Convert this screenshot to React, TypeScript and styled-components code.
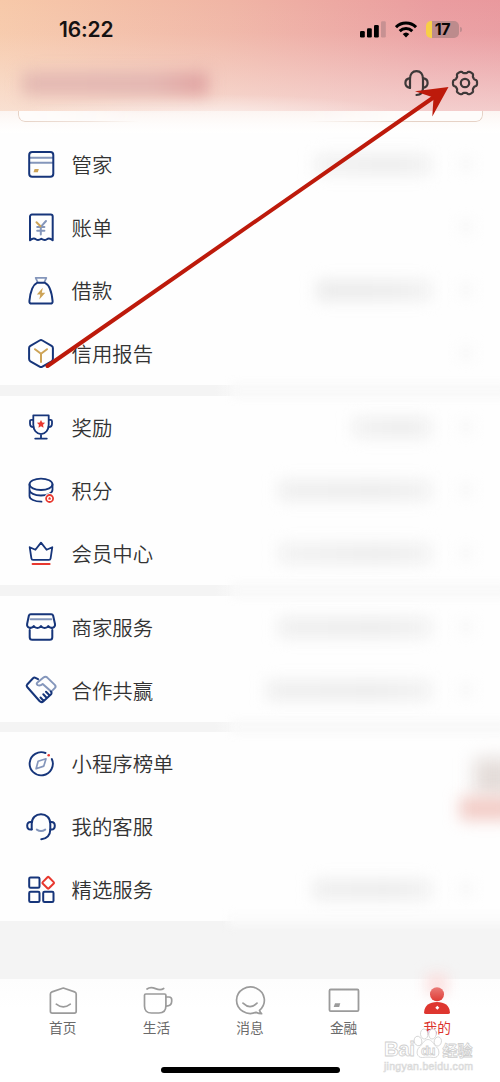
import React from "react";
import styled, { createGlobalStyle } from "styled-components";

const NAVY = "#16357a";
const SLATE = "#8496bb";
const GOLD = "#cda356";
const RED = "#e8382f";
const CJK = `"Noto Sans CJK SC", "Liberation Sans", sans-serif`;

const GlobalStyle = createGlobalStyle`
  * { box-sizing: border-box; }
  body { margin: 0; background: #fff; }
`;

const Screen = styled.div`
  position: relative;
  width: 500px;
  height: 1082px;
  overflow: hidden;
  display: flex;
  flex-direction: column;
  background: #f4f4f4;
  font-family: ${CJK};
`;

const Header = styled.header`
  position: relative;
  height: 111px;
  flex: none;
  background:
    radial-gradient(ellipse 190px 20px at 210px 114px, rgba(255, 255, 255, 0.5), rgba(255, 255, 255, 0)),
    linear-gradient(180deg, rgba(250, 240, 236, 0) 0%, rgba(250, 240, 236, 0.08) 30%, rgba(250, 240, 236, 0.6) 100%),
    linear-gradient(97deg, #f7c9a9 0%, #f0b5a5 45%, #ea9c9f 85%, #e9989d 100%);
`;

const StatusBar = styled.div`
  height: 59px;
  padding: 0 38px 0 59px;
  display: flex;
  align-items: center;
  justify-content: space-between;
`;

const Clock = styled.span`
  font: 600 21px/24px Inter, sans-serif;
  letter-spacing: -0.15px;
  color: #151212;
`;

const StatusIcons = styled.div`
  display: flex;
  align-items: center;
  gap: 9px;
`;

const BatteryWrap = styled.div`
  display: flex;
  align-items: center;
  gap: 1px;
`;

const Battery = styled.div`
  width: 33px;
  height: 17px;
  border-radius: 5px;
  background: linear-gradient(90deg, #f8cf46 5.5px, #bd8b8c 5.5px);
  color: #080606;
  font: 700 16px/17px Inter, sans-serif;
  text-align: center;
  letter-spacing: -0.3px;
`;

const BatteryTip = styled.i`
  width: 2px;
  height: 5px;
  border-radius: 0 2px 2px 0;
  background: #c08c8f;
`;

const HeaderActions = styled.div`
  height: 48px;
  padding-right: 21px;
  display: flex;
  align-items: center;
  justify-content: flex-end;
  gap: 21px;
`;

const Smudge = styled.div<{ $x: number; $y: number; $w: number; $h: number; $color: string; $blur?: number }>`
  position: absolute;
  left: ${(p) => p.$x}px;
  top: ${(p) => p.$y}px;
  width: ${(p) => p.$w}px;
  height: ${(p) => p.$h}px;
  background: ${(p) => p.$color};
  filter: blur(${(p) => p.$blur ?? 8}px);
`;

const CardZone = styled.div`
  height: 22px;
  flex: none;
  padding: 0 17.5px;
  background: linear-gradient(180deg, #fcf5f2, #fefcfb 60%, #fff);
`;

const CardEdge = styled.div`
  height: 11px;
  border: 1.5px solid #e6d2c6;
  border-top: 0;
  border-radius: 0 0 7px 7px;
  background: #fefcfb;
  mask-image: linear-gradient(90deg, #000 0, rgba(0, 0, 0, 0.6) 15%, transparent 26%, transparent 62%, #000 85%);
`;

const Section = styled.section`
  position: relative;
  flex: none;
  background: #fefefe;
`;

const Divider = styled.div<{ $h: number }>`
  position: relative;
  z-index: 1;
  flex: none;
  height: ${(p) => p.$h}px;
  background: linear-gradient(90deg, #f4f4f4 0, #f4f4f4 215px, #fafafa 240px);
  &::after {
    content: "";
    position: absolute;
    left: 232px;
    right: -10px;
    top: -2px;
    bottom: -2px;
    background: #f9f9f9;
    filter: blur(5px);
  }
`;

const Row = styled.div`
  position: relative;
  height: 63px;
  padding: 0 26px 1px;
  display: flex;
  align-items: center;
  gap: 15.5px;
`;

const RowLabel = styled.span`
  padding-bottom: 1px;
  font-size: 20.4px;
  line-height: 30px;
  color: #333;
  font-weight: 350;
`;

const RowValue = styled.div<{ $w: number; $tone: string }>`
  margin-left: auto;
  margin-right: 43px;
  width: ${(p) => p.$w}px;
  height: 19px;
  background: linear-gradient(90deg, ${(p) => p.$tone}, #ebebeb 65%, #f1f1f1);
  filter: blur(8px);
`;

const RowChevron = styled.i`
  position: absolute;
  left: 461px;
  width: 10px;
  height: 14px;
  background: #f6f6f6;
  filter: blur(7px);
`;

const Spacer = styled.div`
  position: relative;
  height: 58px;
  flex: none;
  background: #f4f4f4;
  &::before {
    content: "";
    position: absolute;
    left: 228px;
    right: -10px;
    top: -6px;
    height: 11px;
    background: #fafafa;
    filter: blur(4px);
  }
`;

const TabBar = styled.nav`
  position: relative;
  height: 103px;
  flex: none;
  padding: 7px 16px 0;
  display: grid;
  grid-template-columns: repeat(5, 1fr);
  align-items: start;
  background: linear-gradient(180deg, #fdfdfd, #fff 30px);
`;

const Tab = styled.div<{ $active?: boolean }>`
  position: relative;
  display: flex;
  flex-direction: column;
  align-items: center;
  gap: 1px;
  font-size: 13.7px;
  line-height: 20px;
  color: ${(p) => (p.$active ? "#dc342e" : "#6a6a6a")};
`;

const HomeIndicator = styled.div`
  position: absolute;
  left: 161px;
  bottom: 9px;
  width: 179px;
  height: 6px;
  border-radius: 3px;
  background: #000;
`;

const Watermark = styled.div`
  position: absolute;
  left: 383px;
  top: 1029px;
  width: 94px;
  height: 44px;
`;

const Overlay = styled.svg`
  position: absolute;
  inset: 0;
  pointer-events: none;
`;

const Drawing = styled.svg`
  flex: none;
  display: block;
  overflow: visible;
`;

const Svg = ({ children, w = 30, h = 30, color = NAVY, sw = 2 }: { children: React.ReactNode; w?: number; h?: number; color?: string; sw?: number }) => (
  <Drawing width={w} height={h} viewBox={`0 0 ${w} ${h}`} fill="none" stroke={color} strokeWidth={sw} strokeLinecap="round" strokeLinejoin="round">
    {children}
  </Drawing>
);

const star = (cx: number, cy: number, r: number) =>
  Array.from({ length: 10 }, (_, i) => {
    const a = (-90 + i * 36) * (Math.PI / 180);
    const q = i % 2 ? r * 0.5 : r;
    return `${(cx + q * Math.cos(a)).toFixed(2)},${(cy + q * Math.sin(a)).toFixed(2)}`;
  }).join(" ");

// Six flat teeth with rounded valleys between them.
const gear = (cx: number, cy: number) =>
  Array.from({ length: 120 }, (_, i) => {
    const a = (i * 3 * Math.PI) / 180;
    const r = 10.9 + 1.15 * Math.tanh(2.2 * Math.cos(6 * a) + 0.5);
    return `${(cx + r * Math.cos(a)).toFixed(2)},${(cy + r * Math.sin(a)).toFixed(2)}`;
  }).join(" ");

const icons = {
  steward: (
    <Svg>
      <path d="M4 8.8H27M4 13.8H27" stroke={SLATE} />
      <rect x="3.2" y="3" width="24.1" height="24.7" rx="3" />
      <path d="M8.6 20h4.2l-1 3.200H7.500z" fill={GOLD} stroke="none" />
    </Svg>
  ),
  bill: (
    <Svg>
      <path d="M4 28.300V4.500a2 2 0 0 1 2-2h18.700a2 2 0 0 1 2 2V28.300Q23.300 25.300 20.800 27.300Q18.500 29 15.350 26.800Q12.200 29 9.900 27.300Q7.400 25.300 4 28.300z" />
      <path d="M20 9l-5.200 5.800V22.500M11.200 15h7.200M11.200 18.800h7.200" stroke={SLATE} />
      <path d="M10.500 10.300l4 4" stroke={GOLD} />
    </Svg>
  ),
  loan: (
    <Svg>
      <path d="M11.500 7l-1.800-4.200h10.600l-1.800 4.200" stroke={SLATE} strokeWidth="1.800" />
      <path d="M11 7.800h8c4.500 2 6.500 7 7.600 18.300.2 1.700-.7 2.500-2.200 2.500H5.600c-1.500 0-2.400-.8-2.200-2.500C4.500 14.800 6.500 9.800 11 7.800z" />
      <path d="M16.800 12.800l-6 6.700h3.500l-1 5 6-6.800h-3.500z" fill={GOLD} stroke="none" />
    </Svg>
  ),
  report: (
    <Svg>
      <path d="M13.600 2.500Q15 1.700 16.400 2.500L25.600 7.800Q26.900 8.600 26.900 10.100V21Q26.900 22.500 25.600 23.300L16.400 28.600Q15 29.400 13.600 28.600L4.400 23.300Q3.100 22.500 3.100 21V10.100Q3.100 8.600 4.400 7.800z" />
      <path d="M9 11.200l6 4.500 6-4.500M15 15.700v8.300" stroke={GOLD} />
    </Svg>
  ),
  reward: (
    <Svg sw={1.8}>
      <path d="M7.300 3.300h15.400v9.500c0 5-3 9-7.700 9.300-4.700-.3-7.700-4.300-7.700-9.300zM15 22.300v4M9.200 26.600h11.600" />
      <path d="M7 7.800H5.500c-1 0-1.500.6-1.500 1.500v2.500c0 2 1 3.300 3.500 3.400M23 7.800h1.500c1 0 1.500.6 1.500 1.500v2.500c0 2-1 3.300-3.500 3.400" />
      <polygon points={star(15, 12.2, 4.3)} fill={RED} stroke="none" />
    </Svg>
  ),
  points: (
    <Svg sw={1.8}>
      <ellipse cx="15" cy="9.300" rx="11.500" ry="5.700" />
      <path d="M3.500 9.300v5.500c0 3.200 5 5.700 11.500 5.700s11.500-2.500 11.500-5.700V9.300M3.500 15v6c0 3.200 5 5.700 12 5.700" />
      <circle cx="23.600" cy="23.500" r="5.400" fill="#fff" stroke="none" />
      <circle cx="23.600" cy="23.500" r="3.500" stroke={RED} />
      <polygon points={star(23.6, 23.5, 1.8)} fill={RED} stroke="none" />
    </Svg>
  ),
  member: (
    <Svg sw={1.8}>
      <path d="M15 4.600l5.600 7.200 5.700-2.600-1.700 11.200q-.2 1.400-1.600 1.400H7q-1.400 0-1.600-1.400L3.700 9.200l5.700 2.600z" />
      <path d="M6.500 26h17.200" stroke={RED} />
    </Svg>
  ),
  shop: (
    <Svg>
      <path d="M4.700 7.300h20.600" stroke={SLATE} />
      <path d="M4.700 2.200h20.600q1.400 0 1.800 1.300l1.900 8.500c.6 4-4.400 5.200-6.700 2-1.800 2.600-5.500 2.600-7.300 0-1.800 2.600-5.400 2.600-7.200 0-2.300 3.200-7.300 2-6.700-2l1.800-8.500q.4-1.300 1.800-1.300z" />
      <path d="M3.700 18v7.300q0 2.500 2.500 2.500h17.600q2.500 0 2.500-2.500V18" />
    </Svg>
  ),
  partner: (
    <Svg>
      <path d="M11.500 10c-1.300-1-.8-2 .2-2.800l5.800-4.700c1.300-1 2.600-1 3.800.1l7.500 7.300c1 1 1 2 .2 3l-3 3M11.500 10c2 1.200 3.500.5 5.200-1l8.800 7.800" stroke={SLATE} />
      <path d="M12 4.200L9.500 2.800c-1-.5-1.700-.3-2.500.5L1.200 9.500c-.8.900-.8 1.600 0 2.500l12.300 14c1.400 1.500 2.800 1.300 4 .2l7.300-6.700c1-1 1-2.100 0-3M17.500 25.700l-3-3.200M20.600 22.800l-3.300-3.500M23.500 20.300l-3.500-3.600" />
    </Svg>
  ),
  compass: (
    <Svg sw={1.9}>
      <path d="M19.500 5A11.600 11.600 0 1 0 25.800 11" />
      <circle cx="22.700" cy="7.200" r="1.300" fill={RED} stroke="none" />
      <path d="M20 10.800l-2.200 7.300-7.700 2.700 2-7.500z" stroke={SLATE} strokeWidth="1.700" />
    </Svg>
  ),
  service: (
    <Svg>
      <path d="M5.700 18.300V12.800C5.700 6.800 9.800 3.300 15 3.300s9.300 3.500 9.300 9.500v5.700c0 5.500-3.500 9.500-9 9.700" />
      <path d="M5.700 10.900H4.500c-2 0-3.300 1.500-3.300 3.800s1.300 3.800 3.300 3.800h1.200M24.300 10.900h1.200c2 0 3.300 1.500 3.300 3.800s-1.300 3.800-3.300 3.800h-1.200" />
      <path d="M10.800 18.600q4.200 2.700 8.400 0" stroke={SLATE} />
    </Svg>
  ),
  selected: (
    <Svg>
      <rect x="3.200" y="3.500" width="10.300" height="10.300" rx="1.300" />
      <rect x="3.200" y="17.800" width="10.300" height="10.300" rx="1.300" />
      <rect x="17.200" y="17.800" width="10.300" height="10.300" rx="1.300" />
      <rect x="17.800" y="4.400" width="8.800" height="8.800" rx="1" transform="rotate(45 22.200 8.800)" stroke={RED} />
    </Svg>
  ),
};

type Item = { icon: keyof typeof icons; label: string; w?: number; tone?: string; chevron?: boolean };

const groups: { after: number; items: Item[] }[] = [
  {
    after: 11,
    items: [
      { icon: "steward", label: "管家", w: 116, tone: "#f1f1f1", chevron: true },
      { icon: "bill", label: "账单", chevron: true },
      { icon: "loan", label: "借款", w: 114, tone: "#e9e9e9", chevron: true },
      { icon: "report", label: "信用报告", chevron: true },
    ],
  },
  {
    after: 11,
    items: [
      { icon: "reward", label: "奖励", w: 78, tone: "#f1f1f1", chevron: true },
      { icon: "points", label: "积分", w: 152, tone: "#eeeeee", chevron: true },
      { icon: "member", label: "会员中心", w: 152, tone: "#f1f1f1", chevron: true },
    ],
  },
  {
    after: 10,
    items: [
      { icon: "shop", label: "商家服务", w: 152, tone: "#eeeeee", chevron: true },
      { icon: "partner", label: "合作共赢", w: 164, tone: "#eeeeee", chevron: true },
    ],
  },
  {
    after: 0,
    items: [
      { icon: "compass", label: "小程序榜单" },
      { icon: "service", label: "我的客服" },
      { icon: "selected", label: "精选服务", w: 118, tone: "#eeeeee", chevron: true },
    ],
  },
];

const GREY = "#9b9b9b";
const tabs = [
  {
    label: "首页",
    icon: (
      <Svg w={32} color={GREY} sw={1.7}>
        <path d="M16.300 2l11.300 3.900q1.600.6 1.600 2.200v17.200q0 1.800-1.800 1.800H5.200q-1.800 0-1.800-1.800V8.100q0-1.600 1.600-2.200z" />
        <path d="M9.300 18.200q7 5.500 14 0" />
      </Svg>
    ),
  },
  {
    label: "生活",
    icon: (
      <Svg w={32} color={GREY} sw={1.7}>
        <path d="M5.800 8h18.800q1.300 0 1.300 1.300V20q0 7-7 7h-7.400q-7 0-7-7V9.300Q4.500 8 5.800 8z" />
        <path d="M26 11h3q2.700 0 2.700 2.700v1.600c0 3.200-2 4.700-5.700 4.900M7 3c3-2.200 5.500-1.600 8.500-.4s5.500 1.800 8.200-.1" />
      </Svg>
    ),
  },
  {
    label: "消息",
    icon: (
      <Svg w={32} color={GREY} sw={1.7}>
        <path d="M25.500 24.300A13.900 13.300 0 1 0 22 26.400c2 .9 3.600 1.300 5.600 1.300-1-.8-1.700-1.900-2.100-3.400z" />
        <path d="M9 17.200q7 6.800 14 0" />
      </Svg>
    ),
  },
  {
    label: "金融",
    icon: (
      <Svg w={32} color={GREY} sw={1.8}>
        <rect x="1.500" y="3.500" width="29" height="21.600" rx="1.200" />
        <path d="M7 17.300h5.300l-1.100 3.700H5.700z" fill={GREY} stroke="none" />
      </Svg>
    ),
  },
  {
    label: "我的",
    active: true,
    icon: (
      <Svg w={32} color="none">
        <defs>
          <linearGradient id="head" x1="0" y1="0" x2="0" y2="1">
            <stop offset="0" stopColor="#ea7a76" />
            <stop offset="1" stopColor="#df3c35" />
          </linearGradient>
        </defs>
        <circle cx="16" cy="8.300" r="7" fill="url(#head)" />
        <path d="M16 16c7.500 0 12.500 3.500 12.900 10.200q.1 1.900-1.900 1.900H5q-2 0-1.900-1.900C3.500 19.500 8.500 16 16 16z" fill="#de362f" />
        <path d="M16.300 19.700l2 2-2 2-2-2z" fill="#fff" />
      </Svg>
    ),
  },
];

export default function App() {
  return (
    <>
      <GlobalStyle />
      <Screen>
        <Header>
          <Smudge $x={22} $y={72} $w={186} $h={23} $color="linear-gradient(90deg, #e3b8b2, #e2b5b1 70%, #dfa09f)" />
          <StatusBar>
            <Clock>16:22</Clock>
            <StatusIcons>
              <svg width="26" height="17" viewBox="0 0 26 17">
                <rect x="0" y="10" width="4.800" height="6.500" rx="1.300" />
                <rect x="7" y="7.300" width="4.800" height="9.200" rx="1.300" />
                <rect x="14" y="4" width="4.800" height="12.500" rx="1.300" />
                <rect x="21" y="0.300" width="4.800" height="16.200" rx="1.300" fill="#c79192" />
              </svg>
              <svg width="22" height="17" viewBox="0 0 22 17" fill="none" stroke="#000" strokeWidth="3">
                <path d="M1 6.200a14.300 14.300 0 0 1 20 0" />
                <path d="M4.700 10.100a9 9 0 0 1 12.600 0" />
                <path d="M11 16.500l-3.300-3.400a4.800 4.800 0 0 1 6.600 0z" fill="#000" stroke="none" />
              </svg>
              <BatteryWrap>
                <Battery>17</Battery>
                <BatteryTip />
              </BatteryWrap>
            </StatusIcons>
          </StatusBar>
          <HeaderActions>
            <Svg w={28} h={28} color="#3d3838" sw={2.2}>
              <path d="M8 18.800V10C8 5.200 10.500 2.200 14.500 2.200S21 5.200 21 10v9c0 4.500-2.300 6.800-6.500 7" />
              <path d="M8 9.200c-3 .4-4.600 2.200-4.600 4.800S5 18.400 8 18.800M21 9.200c3 .4 4.600 2.200 4.600 4.800s-1.600 4.400-4.600 4.800" />
            </Svg>
            <Svg w={28} h={28} color="#3d3838" sw={2.2}>
              <polygon points={gear(14, 14)} />
              <circle cx="14" cy="14" r="4.200" />
            </Svg>
          </HeaderActions>
        </Header>
        <CardZone>
          <CardEdge />
        </CardZone>
        {groups.map((g, i) => (
          <React.Fragment key={i}>
            <Section>
              {g.items.map((it) => (
                <Row key={it.label}>
                  {icons[it.icon]}
                  <RowLabel>{it.label}</RowLabel>
                  {it.w && <RowValue $w={it.w} $tone={it.tone ?? "#eee"} />}
                  {it.chevron && <RowChevron />}
                </Row>
              ))}
              {i === 3 && (
                <>
                  <Smudge $x={474} $y={26} $w={40} $h={38} $color="#e4dcd9" $blur={9} />
                  <Smudge $x={460} $y={65} $w={54} $h={23} $color="#f2cbc5" />
                </>
              )}
            </Section>
            {g.after > 0 && <Divider $h={g.after} />}
          </React.Fragment>
        ))}
        <Spacer />
        <TabBar>
          <Smudge $x={427} $y={-5} $w={20} $h={20} $color="#fbdedd" $blur={7} />
          {tabs.map((t) => (
            <Tab key={t.label} $active={t.active}>
              {t.icon}
              <span>{t.label}</span>
            </Tab>
          ))}
          <HomeIndicator />
        </TabBar>
        <Watermark>
          <Drawing width="94" height="44" viewBox="0 0 94 44" fill="#fff" stroke="#cfcfcf" strokeWidth="0.800">
            <g fontFamily='"Liberation Sans", sans-serif' fontWeight="700">
              <text x="1" y="26.500" fontSize="20.500" textLength="31">Bai</text>
              <ellipse cx="35" cy="12" rx="3.800" ry="4.800" transform="rotate(-14 35 12)" />
              <ellipse cx="41.200" cy="5" rx="3.700" ry="5" transform="rotate(-6 41.200 5)" />
              <ellipse cx="49.500" cy="5" rx="3.700" ry="5" transform="rotate(8 49.500 5)" />
              <ellipse cx="54.800" cy="12.500" rx="3.600" ry="4.600" transform="rotate(12 54.800 12.500)" />
              <path d="M45 10.500c4 0 5.500 5 8.500 7.500 4 3.500 3 11-3 10.500-4-.5-7-.5-11 0-6 .5-7-7-3-10.500 3-2.500 4.500-7.500 8.500-7.500z" />
              <text x="38" y="26" fontSize="13" textLength="14.500">du</text>
            </g>
            <text x="59.500" y="26.500" fontSize="15" fontWeight="700" fontFamily={CJK}>经验</text>
            <text x="1" y="40.500" fontSize="10.500" fontFamily='"Liberation Sans", sans-serif' stroke="#d9d9d9" strokeWidth="0.700" textLength="89">jingyan.beidu.com</text>
          </Drawing>
        </Watermark>
        <Overlay width="500" height="1082" viewBox="0 0 500 1082" fill="#bd1a0b">
          <path d="M47.500 366L437 95" stroke="#bd1a0b" strokeWidth="4" strokeLinecap="round" />
          <path d="M448.500 87L415 91.300L433.500 97.500L432.300 116.500z" />
        </Overlay>
      </Screen>
    </>
  );
}
